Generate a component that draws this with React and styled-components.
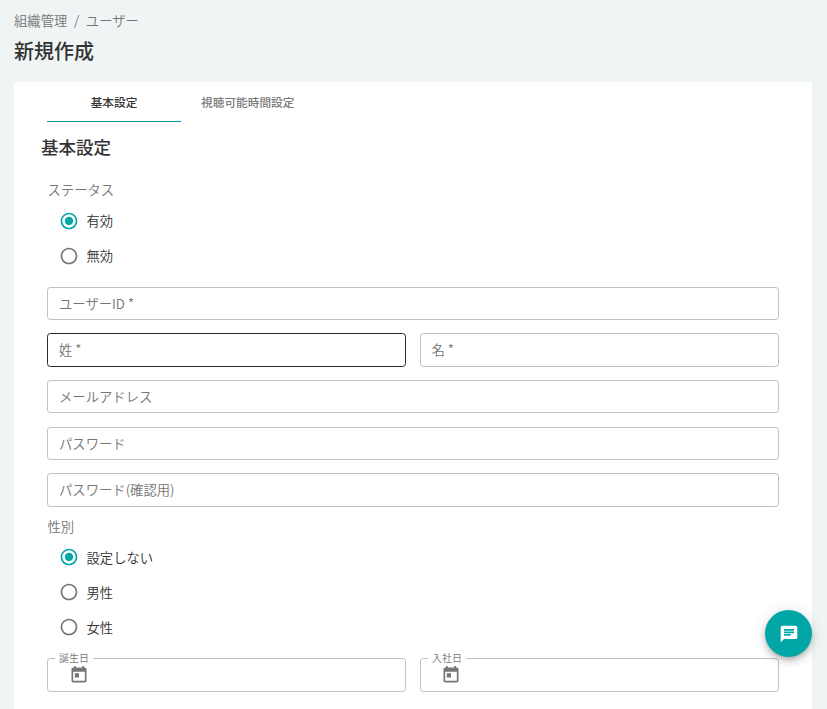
import React from 'react';
import styled, { createGlobalStyle } from 'styled-components';
import { MdChat, MdToday, MdRadioButtonChecked, MdRadioButtonUnchecked } from 'react-icons/md';

const GlobalStyle = createGlobalStyle`
  *, *::before, *::after { box-sizing: border-box; }
  body {
    margin: 0;
    background: #eff5f5;
    color: #333;
    font-family: "Noto Sans CJK JP", "Noto Sans", sans-serif;
    font-size: 13.333px;
    font-weight: 350;
    overflow: hidden;
  }
`;

const Page = styled.main`
  display: flex;
  flex-direction: column;
  height: 709px;
  padding: 11px 15px 0 14px;
`;

const Breadcrumbs = styled.nav`
  display: flex;
  gap: 6.667px;
  height: 20px;
  line-height: 20px;
  color: #757575;
`;

const PageTitle = styled.h1`
  margin: 5px 0 0;
  height: 30px;
  font-size: 20px;
  line-height: 30px;
  font-weight: 500;
`;

const Card = styled.section`
  flex: 1;
  margin-top: 16px;
  padding: 0 33px;
  background: #fff;
  border-radius: 3px 3px 0 0;
`;

const Tabs = styled.div`
  display: flex;
  height: 40px;
`;

const Tab = styled.button`
  min-width: 134px;
  height: 40px;
  padding: 0 20px;
  border: 0;
  border-bottom: 1px solid ${(p) => (p.$active ? '#00a0a2' : 'transparent')};
  background: none;
  color: ${(p) => (p.$active ? '#333' : '#7a7a7a')};
  font: 500 11.667px/20px "Noto Sans CJK JP", sans-serif;

  & + & {
    padding-left: 19.5px;
  }
`;

const SectionTitle = styled.h2`
  margin: 12px 0 0 -6px;
  height: 26px;
  font-size: 17.5px;
  line-height: 26px;
  font-weight: 500;
`;

const GroupLabel = styled.div`
  height: 20px;
  margin-top: ${(p) => p.$top}px;
  padding-left: 0.5px;
  line-height: 20px;
  color: #757575;
`;

const RadioGroup = styled.div`
  display: grid;
  grid-auto-rows: 35px;
  margin-top: ${(p) => p.$top}px;
`;

const RadioRow = styled.label`
  display: flex;
  align-items: center;
  gap: 7.5px;
  padding-left: 12px;
  line-height: 20px;

  svg {
    flex: none;
    color: ${(p) => (p.$checked ? '#00a7a6' : '#757575')};
  }
`;

const RadioText = styled.span`
  padding-top: ${(p) => p.$drop || 0}px;
`;

const Fields = styled.div`
  display: grid;
  grid-template-columns: 359px 359px;
  gap: 13.333px 14px;
  margin-top: ${(p) => p.$top}px;
`;

const Field = styled.div`
  position: relative;
  grid-column: ${(p) => (p.$wide ? '1 / -1' : 'auto')};
  display: flex;
  align-items: center;
  height: 33.333px;
  padding: 0.667px 11px 0;
  border: 1px solid ${(p) => (p.$active ? '#2b2b2b' : '#c0c0c0')};
  border-radius: 3.333px;
  color: #757575;
  line-height: 20px;

  &:nth-child(3) {
    padding-left: 10.5px;
  }
`;

const RequiredMark = styled.span`
  margin: -2px 0 0 3px;
`;

const DateField = styled(Field)`
  padding: 0 0 0 21px;

  &:nth-child(2) {
    padding-left: 20px;
  }
`;

const FloatingLabel = styled.span`
  position: absolute;
  top: -9px;
  left: 7px;
  padding: 0 4px;
  background: #fff;
  font-size: 10px;
  line-height: 16px;
`;

const ChatButton = styled.button`
  position: fixed;
  top: 610px;
  left: 765px;
  display: flex;
  align-items: center;
  justify-content: center;
  width: 47px;
  height: 47px;
  padding: 0;
  border: 0;
  border-radius: 50%;
  background: #00a7a6;
  color: #fff;
  box-shadow: 0 2.5px 4px -1px rgba(0, 0, 0, 0.2), 0 5px 8px rgba(0, 0, 0, 0.14),
    0 1px 15px rgba(0, 0, 0, 0.12);
`;

function Radio({ label, checked, drop }) {
  const Icon = checked ? MdRadioButtonChecked : MdRadioButtonUnchecked;
  return (
    <RadioRow $checked={checked}>
      <Icon size={20} />
      <RadioText $drop={drop}>{label}</RadioText>
    </RadioRow>
  );
}

function TextField({ label, required, wide, active }) {
  return (
    <Field $wide={wide} $active={active}>
      <span>{label}</span>
      {required && <RequiredMark>*</RequiredMark>}
    </Field>
  );
}

export default function App() {
  return (
    <>
      <GlobalStyle />
      <Page>
        <Breadcrumbs>
          <span>組織管理</span>
          <span>/</span>
          <span>ユーザー</span>
        </Breadcrumbs>
        <PageTitle>新規作成</PageTitle>
        <Card>
          <Tabs>
            <Tab $active>基本設定</Tab>
            <Tab>視聴可能時間設定</Tab>
          </Tabs>
          <SectionTitle>基本設定</SectionTitle>
          <GroupLabel $top={20}>ステータス</GroupLabel>
          <RadioGroup $top={3}>
            <Radio label="有効" checked />
            <Radio label="無効" />
          </RadioGroup>
          <Fields $top={13.667}>
            <TextField wide required label="ユーザーID" />
            <TextField active required label="姓" />
            <TextField required label="名" />
            <TextField wide label="メールアドレス" />
            <TextField wide label="パスワード" />
            <TextField wide label="パスワード(確認用)" />
          </Fields>
          <GroupLabel $top={10.333}>性別</GroupLabel>
          <RadioGroup $top={3}>
            <Radio label="設定しない" checked drop={2} />
            <Radio label="男性" drop={2} />
            <Radio label="女性" drop={2} />
          </RadioGroup>
          <Fields $top={13.333}>
            <DateField>
              <FloatingLabel>誕生日</FloatingLabel>
              <MdToday size={20} />
            </DateField>
            <DateField>
              <FloatingLabel>入社日</FloatingLabel>
              <MdToday size={20} />
            </DateField>
          </Fields>
        </Card>
      </Page>
      <ChatButton aria-label="チャット">
        <MdChat size={20} />
      </ChatButton>
    </>
  );
}
